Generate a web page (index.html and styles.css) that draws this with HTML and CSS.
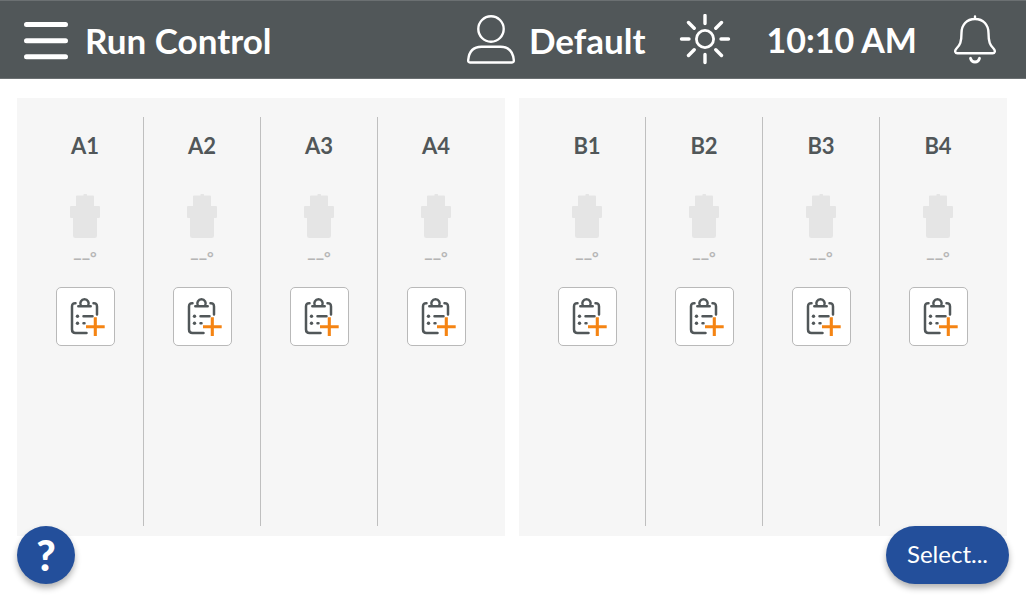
FILE: index.html
```html
<!DOCTYPE html>
<html lang="en">
<head>
<meta charset="utf-8">
<meta name="viewport" content="width=device-width, initial-scale=1">
<title>Run Control</title>
<link rel="stylesheet" href="styles.css">
<script src="app.js" defer></script>
</head>
<body>
<svg class="symbols" aria-hidden="true">
  <symbol id="vessel" viewBox="0 0 32 46">
    <path d="M14.500 2.500V1.500Q14.500 1 15 1H17.500Q18 1 18 1.500V2.500H24Q25 2.500 25 3.500V13H30Q31 13 31 14V24Q31 25 30 25H28V42.500Q28 45 25.500 45H6.500Q4 45 4 42.500V25H2Q1 25 1 24V14Q1 13 2 13H7V3.500Q7 2.500 8 2.500Z" fill="#e5e5e5"/>
  </symbol>
  <symbol id="clipboard" viewBox="0 0 42 42">
    <g fill="none" stroke="#515759" stroke-width="2.500" stroke-linecap="round">
      <path d="M11.500 7.200Q8 7 8 10.500V33.500Q8 37 11.500 37H22.500M29.500 7.200Q33 7 33 10.500V18.500"/>
      <path d="M14.300 10.200H26.700M16.800 9.500A4.200 4.200 0 1 1 24.200 9.500"/>
      <path d="M19.500 20.200H28.500M19.500 27.200H20.500"/>
    </g>
    <circle cx="13.500" cy="20.200" r="1.700" fill="#515759"/>
    <circle cx="13.500" cy="27.200" r="1.700" fill="#515759"/>
    <path d="M31.300 21.300V40M22 30.700H40.700" stroke="#f58413" stroke-width="3.100" fill="none"/>
  </symbol>
</svg>
<header class="topbar">
  <button class="icon-button menu" type="button" aria-label="Menu">
    <svg width="46" height="40" viewBox="0 0 46 40" stroke="#fff" stroke-width="5" stroke-linecap="round"><path d="M3.500 4.500H42.500M3.500 20.800H42.500M3.500 36.800H42.500"/></svg>
  </button>
  <h1 class="title">Run Control</h1>
  <button class="user" type="button">
    <svg width="50" height="50" viewBox="0 0 50 50" fill="none" stroke="#fff" stroke-width="2.400"><circle cx="25" cy="14" r="12.700"/><path d="M4 47.500Q2 47.500 2.200 45Q3.500 31.800 15.500 31.800H34.500Q46.500 31.800 47.800 45Q48 47.500 46 47.500Z" stroke-linejoin="round"/></svg>
    <span>Default</span>
  </button>
  <button class="icon-button sun" type="button" aria-label="Brightness">
    <svg width="52" height="52" viewBox="0 0 52 52" fill="none" stroke="#fff" stroke-linecap="round"><circle cx="26" cy="25" r="8.600" stroke-width="2.800"/><path stroke-width="3.400" d="M26 1.500V9.500M26 40.500V48.500M2.500 25H10M42 25H49.500M9.500 8.500L15.200 14.200M36.800 35.800L42.500 41.500M9.500 41.500L15.200 35.800M36.800 14.200L42.500 8.500"/></svg>
  </button>
  <time class="clock">10:10 AM</time>
  <button class="icon-button bell" type="button" aria-label="Notifications">
    <svg width="42" height="50" viewBox="0 0 42 50" fill="none" stroke="#fff" stroke-width="2.400" stroke-linecap="round" stroke-linejoin="round"><path d="M21 1.500V4M21 4C12.500 4 7.500 10 7.500 18C7.500 27 6 30 2.500 33.500C0 36.300 1.500 38.300 3.300 38.300H38.700C40.500 38.300 42 36.300 39.500 33.500C36 30 34.500 27 34.500 18C34.500 10 29.500 4 21 4Z"/><path d="M16.500 43.300Q17.500 47 21 47T25.500 43.300" stroke-width="2.800"/></svg>
  </button>
</header>
<main class="banks">
  <section class="bank" data-bank="A" aria-label="Bank A"></section>
  <section class="bank" data-bank="B" aria-label="Bank B"></section>
</main>
<footer class="actions">
  <button class="help" type="button" aria-label="Help">?</button>
  <button class="select" type="button">Select...</button>
</footer>
</body>
</html>
```
FILE: styles.css
```css
* {
  box-sizing: border-box;
}

body {
  margin: 0;
  min-height: 100vh;
  display: flex;
  flex-direction: column;
  position: relative;
  background: #fff;
  color: #515759;
  font-family: Lato, "Liberation Sans", sans-serif;
}

button {
  font: inherit;
  color: inherit;
  padding: 0;
  border: 0;
  background: none;
  cursor: pointer;
}

svg {
  display: block;
  flex: none;
}

.symbols {
  position: absolute;
  width: 0;
  height: 0;
}

.topbar {
  display: flex;
  align-items: center;
  padding: 0 30px 0 23px;
  height: 79px;
  border-top: 1px solid #6b7072;
  border-bottom: 1px solid #6b7072;
  background: #515759;
  color: #fff;
  font-size: 35px;
  font-weight: 700;
  line-height: 48px;
  white-space: nowrap;
}

.title {
  margin: 0 auto 0 16px;
  font-size: inherit;
}

.user {
  display: flex;
  align-items: center;
  gap: 13px;
}

.sun {
  margin: 0 35px 0 34px;
}

.clock {
  font-size: 34px;
}

.bell {
  margin-left: 37px;
}

.banks {
  flex: 1;
  display: grid;
  grid-template-columns: 1fr 1fr;
  gap: 14px;
  padding: 19px 19px 64px 17px;
}

.bank {
  display: grid;
  grid-template-columns: repeat(4, 1fr);
  padding: 19px 10px 10px;
  background: #f6f6f6;
}

.position {
  display: flex;
  flex-direction: column;
  align-items: center;
  padding-top: 17px;
  border-right: 1px solid #bfbfbf;
}

.position:last-child {
  border-color: transparent;
}

.name {
  margin: 0 0 35px;
  font-size: 22px;
  font-weight: 700;
  line-height: 24px;
}

.temperature {
  display: flex;
  margin: 6px 0 22px;
  height: 20px;
  color: #b5b5b5;
  font-size: 18px;
  font-weight: 700;
  line-height: 10px;
}

.temperature sup {
  font-size: 16px;
  line-height: 24px;
}

.assign {
  display: grid;
  place-items: center;
  width: 59px;
  height: 59px;
  border: 1px solid #b9b9b9;
  border-radius: 5px;
  background: #fff;
}

.actions {
  position: absolute;
  right: 17px;
  bottom: 16px;
  left: 17px;
  display: flex;
  justify-content: space-between;
}

.help,
.select {
  height: 58px;
  border-radius: 29px;
  background: #234f9b;
  color: #fff;
  box-shadow: 0 4px 6px rgba(0, 0, 0, 0.3);
}

.help {
  width: 58px;
  font-size: 42px;
  font-weight: 900;
}

.select {
  padding: 0 21px 3px;
  font-size: 24px;
}
```
FILE: app.js
```js
document.querySelectorAll(".bank").forEach((bank) => {
  for (let i = 1; i <= 4; i++) {
    const name = bank.dataset.bank + i;
    bank.insertAdjacentHTML("beforeend", `
      <article class="position">
        <h2 class="name">${name}</h2>
        <svg width="32" height="46"><use href="#vessel"/></svg>
        <div class="temperature"><span>__</span><sup>°</sup></div>
        <button class="assign" type="button" aria-label="Assign protocol to ${name}">
          <svg width="42" height="42"><use href="#clipboard"/></svg>
        </button>
      </article>`);
  }
});
```
